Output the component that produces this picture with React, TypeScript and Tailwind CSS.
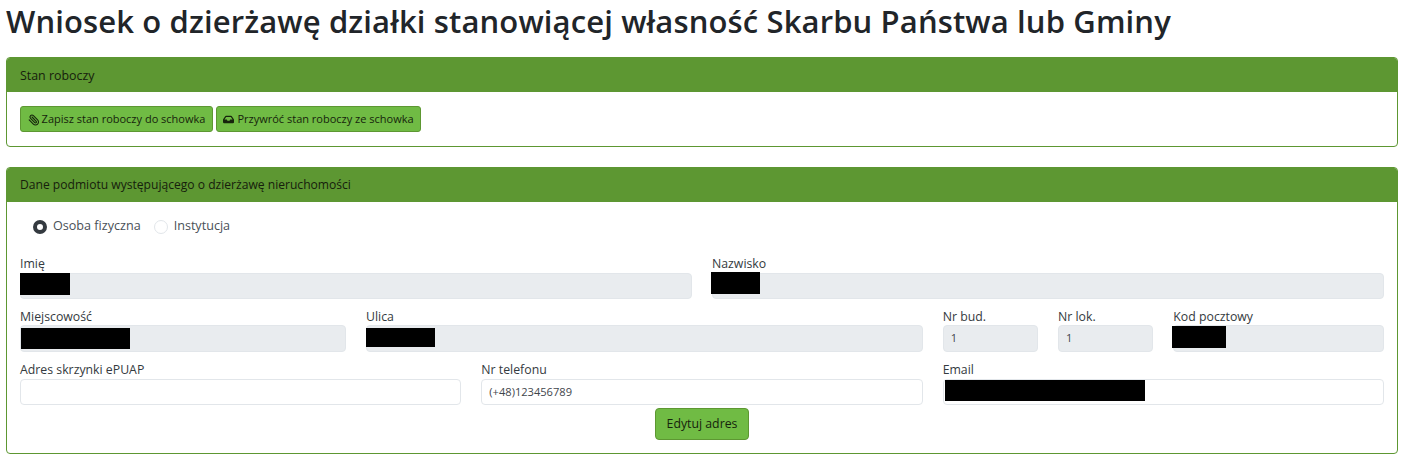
import { Paperclip } from "lucide-react";
import { FaInbox } from "react-icons/fa";

const inputBase =
  "w-full rounded-[4px] border border-[#e2e6ea] px-[7px] text-[11.1px] leading-[24px] text-[#3f464d]";

function Field({
  label,
  value,
  span,
  editable,
  hidden,
  labelClass = "h-[27px]",
  inputClass = "h-[26px]",
}: {
  label: string;
  value?: string;
  span: string;
  editable?: boolean;
  hidden?: string;
  labelClass?: string;
  inputClass?: string;
}) {
  return (
    <div className={span}>
      <label className={`block pt-[9px] text-[12.3px] leading-[17px] text-[#343a40] ${labelClass}`}>{label}</label>
      <div className="relative">
        <div className={`${inputBase} ${inputClass} ${editable ? "bg-white" : "bg-[#e9ecef]"}`}>{value}</div>
        {/* redacted values */}
        {hidden && <div className={`absolute bg-black ${hidden}`} />}
      </div>
    </div>
  );
}

const row2 = { labelClass: "h-[26px]", inputClass: "h-[27px]" };

export default function App() {
  return (
    <main className="min-h-screen overflow-hidden bg-white px-[6px] font-['Open_Sans','Noto_Sans',sans-serif] text-[#212529]">
      <h1 className="h-[57px] pt-[1px] text-[31px] font-semibold leading-[40px] tracking-[0.13px] text-[#212529]">
        Wniosek o dzierżawę działki stanowiącej własność Skarbu Państwa lub Gminy
      </h1>

      <section className="h-[90px] w-[1392px] rounded-[4px] border border-[#5d9732]">
        <header className="flex h-[34px] items-center rounded-t-[3px] bg-[#5d9732] px-[13px] pt-[2px] text-[12.4px] text-[#16200c]">
          Stan roboczy
        </header>
        <div className="flex gap-[3px] px-[13px] pt-[14px]">
          <button className="flex h-[26px] w-[193px] items-center justify-center gap-[2px] rounded-[3px] border border-[#5d9732] bg-[#70bb44] pt-[1px] text-[11px] text-[#16240c]">
            <Paperclip className="h-[12px] w-[12px] -scale-x-100" strokeWidth={2.2} />
            Zapisz stan roboczy do schowka
          </button>
          <button className="flex h-[26px] w-[205px] items-center justify-center gap-[3px] rounded-[3px] border border-[#5d9732] bg-[#70bb44] pt-[1px] text-[11px] text-[#16240c]">
            <FaInbox className="h-[11px] w-[11px]" />
            Przywróć stan roboczy ze schowka
          </button>
        </div>
      </section>

      <section className="mt-[20px] h-[287px] w-[1392px] rounded-[4px] border border-[#5d9732]">
        <header className="flex h-[34px] items-center rounded-t-[3px] bg-[#5d9732] px-[13px] text-[12.1px] text-[#16200c]">
          Dane podmiotu występującego o dzierżawę nieruchomości
        </header>
        <div className="px-[13px]">
          <div className="flex h-[44px] items-center pl-[13px] pt-[5px] text-[12.6px] text-[#495057]">
            <span className="h-[14px] w-[14px] rounded-full border-[4px] border-[#343a40] bg-white" />
            <span className="ml-[6px]">Osoba fizyczna</span>
            <span className="ml-[13px] h-[14px] w-[14px] rounded-full border border-[#e2e6ea] bg-white" />
            <span className="ml-[6px]">Instytucja</span>
          </div>
          <div className="grid grid-cols-12 gap-x-[20px]">
            <Field label="Imię" span="col-span-6" hidden="left-0 top-0 h-[22px] w-[50px]" />
            <Field label="Nazwisko" span="col-span-6" hidden="-left-[1px] -top-[1px] h-[22px] w-[49px]" />
            <Field label="Miejscowość" span="col-span-3" hidden="left-[1px] top-[3px] h-[21px] w-[109px]" {...row2} />
            <Field label="Ulica" span="col-span-5" hidden="left-0 top-[3px] h-[19px] w-[69px]" {...row2} />
            <Field label="Nr bud." span="col-span-1" value="1" {...row2} />
            <Field label="Nr lok." span="col-span-1" value="1" {...row2} />
            <Field label="Kod pocztowy" span="col-span-2" hidden="-left-[1px] top-[1px] h-[22px] w-[54px]" {...row2} />
            <Field label="Adres skrzynki ePUAP" span="col-span-4" editable />
            <Field label="Nr telefonu" span="col-span-4" editable value="(+48)123456789" />
            <Field label="Email" span="col-span-4" editable hidden="left-[2px] top-[1px] h-[21px] w-[200px]" />
          </div>
          <div className="mt-[3px] flex justify-center">
            <button className="h-[32px] w-[94px] rounded-[4px] border border-[#5d9732] bg-[#70bb44] text-[12.3px] text-[#16240c]">
              Edytuj adres
            </button>
          </div>
        </div>
      </section>
    </main>
  );
}
